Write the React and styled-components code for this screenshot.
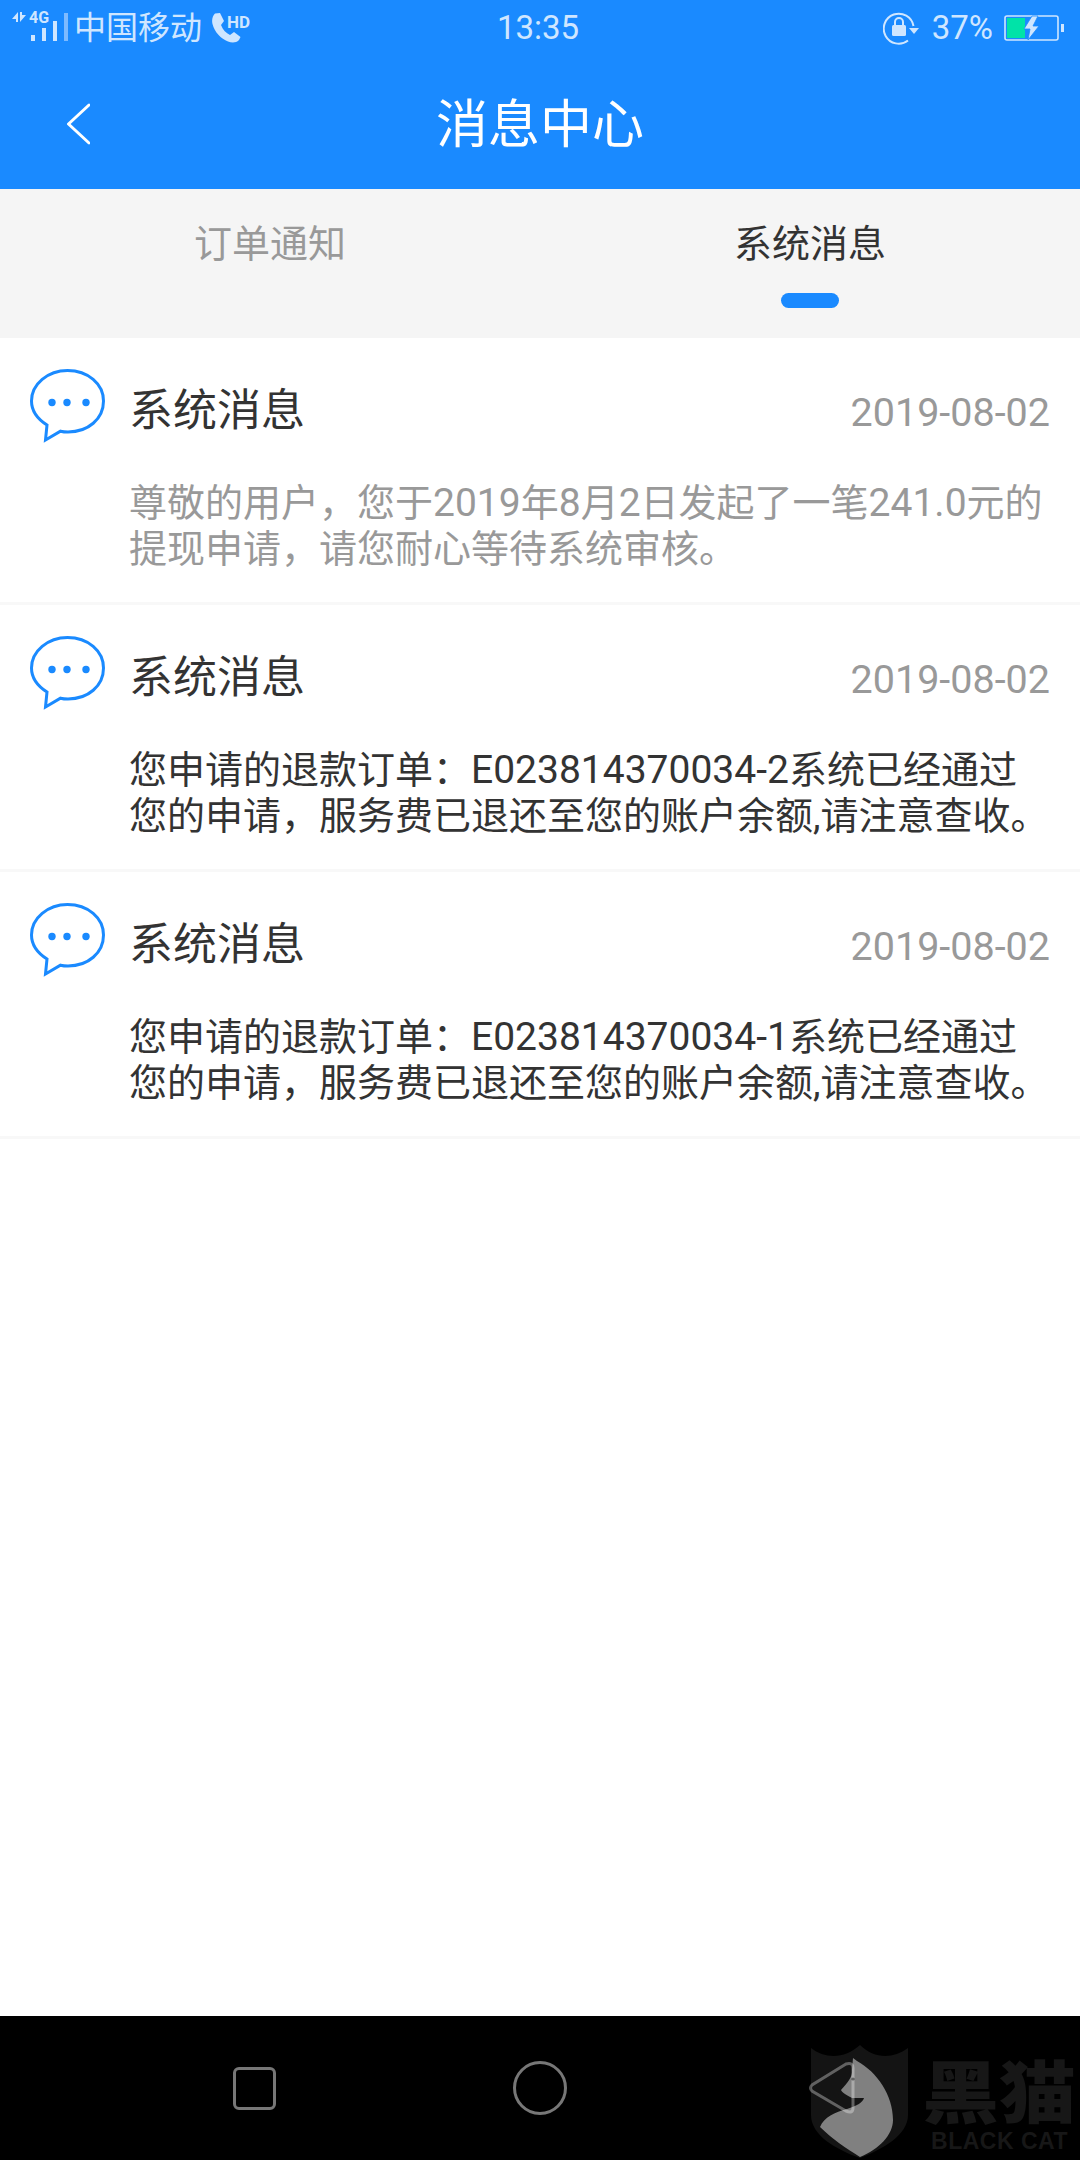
import React from 'react'
import styled, { createGlobalStyle } from 'styled-components'

const Global = createGlobalStyle`
    html, body {
        margin: 0;
        padding: 0;
        background: #fff;
    }
    body {
        font-family: Roboto, "Noto Sans CJK SC", sans-serif;
    }
`;

const Page = styled.div`
    position: relative;
    width: 1080px;
    height: 2160px;
    display: flex;
    flex-direction: column;
    overflow: hidden;
`;

const Header = styled.header`
    height: 189px;
    background: #1a8aff;
    display: flex;
    flex-direction: column;
`;

const StatusBar = styled.div`
    height: 56px;
    padding: 0 16px 0 12px;
    display: grid;
    grid-template-columns: 1fr auto 1fr;
    align-items: center;
    color: #cfe6ff;
`;

const StatusLeft = styled.div`
    display: flex;
    align-items: center;
`;

const StatusRight = styled.div`
    display: flex;
    align-items: center;
    justify-content: flex-end;
`;

const Carrier = styled.span`
    font-size: 32px;
    margin: 0 10px 0 5px;
    line-height: 56px;
`;

const StatusText = styled.span`
    font-size: 33px;
    line-height: 56px;
    margin: ${p => p.$margin || '0'};
`;

const TitleRow = styled.div`
    flex: 1;
    display: grid;
    grid-template-columns: 1fr auto 1fr;
    align-items: center;
    padding: 2px 66px 0;
`;

const BackButton = styled.svg`
    width: 24px;
    height: 42px;
    display: block;
`;

const Title = styled.h1`
    margin: 4px 0 0;
    font-size: 52px;
    font-weight: 400;
    color: #fff;
    line-height: 1;
`;

const Tabs = styled.nav`
    height: 149px;
    background: #f5f5f5;
    display: grid;
    grid-template-columns: 1fr 1fr;
`;

const Tab = styled.div`
    display: flex;
    flex-direction: column;
    align-items: center;
    padding-top: 27px;
    font-size: 38px;
    line-height: 56px;
    color: ${p => (p.$active ? '#333' : '#999')};
`;

const TabMark = styled.span`
    width: 58px;
    height: 15px;
    margin-top: 21px;
    border-radius: 8px;
    background: ${p => (p.$active ? '#1a8aff' : 'transparent')};
`;

const List = styled.main`
    flex: 1;
    background: #fff;
`;

const Row = styled.article`
    height: 267px;
    box-sizing: border-box;
    padding: 31px 30px 0;
    border-bottom: 3px solid #f8f8f8;
    display: grid;
    grid-template-columns: 76px 1fr;
    column-gap: 23px;
`;

const Bubble = styled.svg`
    width: 76px;
    height: 74px;
    display: block;
`;

const RowBody = styled.div`
    min-width: 0;
`;

const RowHead = styled.div`
    display: flex;
    justify-content: space-between;
    align-items: center;
    height: 76px;
`;

const RowTitle = styled.span`
    font-size: 44px;
    color: #333;
`;

const RowDate = styled.span`
    font-size: 39.5px;
    color: #999;
    position: relative;
    top: 5px;
`;

const RowText = styled.p`
    margin: 35px 0 0;
    font-size: 38px;
    line-height: 46px;
    white-space: nowrap;
    color: ${p => (p.$read ? '#999' : '#333')};
`;

const Latin = styled.span`
    font-size: 39px;
`;

const NavBar = styled.footer`
    height: 144px;
    background: #000;
    display: grid;
    grid-template-columns: 233px 43px 237px 54px 242px 45px 1fr;
    align-items: center;
`;

const NavSquare = styled.span`
    grid-column: 2;
    width: 43px;
    height: 43px;
    box-sizing: border-box;
    border: 3px solid #777;
    border-radius: 6px;
`;

const NavCircle = styled.span`
    grid-column: 4;
    width: 54px;
    height: 54px;
    box-sizing: border-box;
    border: 3px solid #777;
    border-radius: 50%;
`;

const NavBack = styled.svg`
    grid-column: 6;
    width: 48px;
    height: 54px;
    position: relative;
    z-index: 2;
`;

const Watermark = styled.div`
    position: absolute;
    left: 811px;
    bottom: 2px;
    display: flex;
    gap: 14px;
`;

const Shield = styled.svg`
    width: 97px;
    height: 113px;
    display: block;
`;

const BrandText = styled.div`
    width: 155px;
    color: #171717;
    display: flex;
    flex-direction: column;
    align-items: center;
`;

const BrandName = styled.span`
    font-size: 68px;
    line-height: 78px;
    font-weight: 900;
    margin-top: 5px;
    transform: scaleX(1.13);
    font-family: "Noto Sans CJK SC", sans-serif;
`;

const BrandLatin = styled.span`
    font-size: 23px;
    line-height: 26px;
    font-weight: 700;
    letter-spacing: 0.5px;
    white-space: nowrap;
    font-family: "Liberation Sans", sans-serif;
`;

function SignalIcon() {
    return (
        <svg width="57" height="42" viewBox="0 0 57 42" style={{ display: 'block' }}>
            <path d="M0 12 L6 5 V15 H4 V12 Z" fill="#cfe6ff" />
            <path d="M8 5 H10 V8 H14 L8 15 Z" fill="#cfe6ff" />
            <text x="17" y="16" fontSize="16" fontWeight="700" fontFamily="Roboto, sans-serif" fill="#cfe6ff">4G</text>
            <rect x="19" y="28" width="4" height="6" fill="#cfe6ff" />
            <rect x="30" y="21" width="4" height="13" fill="#cfe6ff" />
            <rect x="41" y="14" width="4" height="20" fill="#cfe6ff" />
            <rect x="52" y="6" width="4" height="28" fill="#7dbaff" />
        </svg>
    )
}

function CallIcon() {
    return (
        <svg width="41" height="30" viewBox="0 0 41 30" style={{ display: 'block' }}>
            <path d="M3 0.5 L8 0 L12 8 L9 12 C11 17 14 20 18 22 L22 19 L28.5 24 L27 27 C24 30 20 30 16 28.5 C9 26 2.5 19 0.5 11 C-0.5 7 0.5 3 3 0.5 Z" fill="#cfe6ff" />
            <text x="15" y="15" fontSize="17" fontWeight="700" fontFamily="Roboto, sans-serif" fill="#cfe6ff">HD</text>
        </svg>
    )
}

function RotateLockIcon() {
    return (
        <svg width="36" height="33" viewBox="0 0 36 33" style={{ display: 'block' }}>
            <path d="M30.5 14 A15 15 0 1 0 25 28.5" fill="none" stroke="#cfe6ff" strokeWidth="2" />
            <path d="M26 16 H36 L31 22 Z" fill="#cfe6ff" />
            <rect x="9" y="13" width="14" height="11" rx="1.5" fill="#cfe6ff" />
            <path d="M12 13 V10 A4 4 0 0 1 20 10 V13" fill="none" stroke="#cfe6ff" strokeWidth="2" />
        </svg>
    )
}

function BatteryIcon() {
    return (
        <svg width="60" height="26" viewBox="0 0 60 26" style={{ display: 'block' }}>
            <rect x="1" y="1" width="53" height="24" rx="2" fill="none" stroke="#cfe6ff" strokeWidth="1.6" />
            <rect x="3" y="3" width="18" height="20" fill="#00e3a8" />
            <rect x="57" y="9" width="3" height="8" fill="#cfe6ff" />
            <path d="M28 1 L20 14 H26 L24 25 L35 11 H29 L34 1 Z" fill="#cfe6ff" stroke="#1a8aff" strokeWidth="0.8" />
        </svg>
    )
}

function MessageBubble() {
    return (
        <Bubble viewBox="0 0 76 74">
            <path
                d="M37.5 1.5 C58 1.5 73.5 15 73.5 32 C73.5 50 58 63 38 63 C35 63 33 62.8 30.5 62.2 L15.5 71 L17 56 C7.5 50 1.5 42 1.5 32 C1.5 15 18 1.5 37.5 1.5 Z"
                fill="none"
                stroke="#1a8aff"
                strokeWidth="3"
            />
            <circle cx="22" cy="33.5" r="3.7" fill="#1a8aff" />
            <circle cx="37" cy="33.5" r="3.7" fill="#1a8aff" />
            <circle cx="56" cy="33.5" r="3.7" fill="#1a8aff" />
        </Bubble>
    )
}

// latin runs are a touch larger than the cjk text around them
function MixedLine({ text }) {
    return text.split(/([A-Za-z0-9.-]+)/).map((part, i) =>
        i % 2 ? <Latin key={i}>{part}</Latin> : part
    )
}

const messages = [
    {
        id: 1,
        read: true,
        lines: ['尊敬的用户，您于2019年8月2日发起了一笔241.0元的', '提现申请，请您耐心等待系统审核。'],
    },
    {
        id: 2,
        read: false,
        lines: ['您申请的退款订单：E023814370034-2系统已经通过', '您的申请，服务费已退还至您的账户余额,请注意查收。'],
    },
    {
        id: 3,
        read: false,
        lines: ['您申请的退款订单：E023814370034-1系统已经通过', '您的申请，服务费已退还至您的账户余额,请注意查收。'],
    },
]

export default function App() {
    return (
        <Page>
            <Global />
            <Header>
                <StatusBar>
                    <StatusLeft>
                        <SignalIcon />
                        <Carrier>中国移动</Carrier>
                        <CallIcon />
                    </StatusLeft>
                    <StatusText>13:35</StatusText>
                    <StatusRight>
                        <RotateLockIcon />
                        <StatusText $margin="0 11px 0 13px">37%</StatusText>
                        <BatteryIcon />
                    </StatusRight>
                </StatusBar>
                <TitleRow>
                    <BackButton viewBox="0 0 24 42">
                        <path d="M23 2 L2.5 21 L23 40" fill="none" stroke="#fff" strokeWidth="3" strokeLinecap="round" strokeLinejoin="round" />
                    </BackButton>
                    <Title>消息中心</Title>
                </TitleRow>
            </Header>
            <Tabs>
                <Tab>
                    订单通知
                    <TabMark />
                </Tab>
                <Tab $active>
                    系统消息
                    <TabMark $active />
                </Tab>
            </Tabs>
            <List>
                {messages.map(m => (
                    <Row key={m.id}>
                        <MessageBubble />
                        <RowBody>
                            <RowHead>
                                <RowTitle>系统消息</RowTitle>
                                <RowDate>2019-08-02</RowDate>
                            </RowHead>
                            <RowText $read={m.read}>
                                <MixedLine text={m.lines[0]} />
                                <br />
                                <MixedLine text={m.lines[1]} />
                            </RowText>
                        </RowBody>
                    </Row>
                ))}
            </List>
            <NavBar>
                <NavSquare />
                <NavCircle />
                <NavBack viewBox="0 0 48 54">
                    <path d="M37 3 L3 24 Q0 27 3 30 L37 50 Q44 53 44 47 V7 Q44 1 37 3 Z" fill="none" stroke="rgba(255,255,255,0.33)" strokeWidth="3" />
                </NavBack>
            </NavBar>
            <Watermark>
                <Shield viewBox="0 0 97 113">
                    <path d="M0 3 C14 14 34 14 49 0 C63 14 82 14 97 3 V70 C97 90 72 104 49 113 C24 104 0 90 0 70 Z" fill="#141414" />
                    <path d="M42 13 L46 16 C66 27 82 50 82 75 C82 90 68 104 49 112 C36 104 20 93 9 82 C13 72 24 67 36 64 C46 61 52 57 53 53 L41 53 C36 50 31 48 30 45 C36 38 42 32 41 25 Z" fill="#808080" />
                    <circle cx="42" cy="34" r="1.6" fill="#141414" />
                </Shield>
                <BrandText>
                    <BrandName>黑猫</BrandName>
                    <BrandLatin>BLACK CAT</BrandLatin>
                </BrandText>
            </Watermark>
        </Page>
    )
}
